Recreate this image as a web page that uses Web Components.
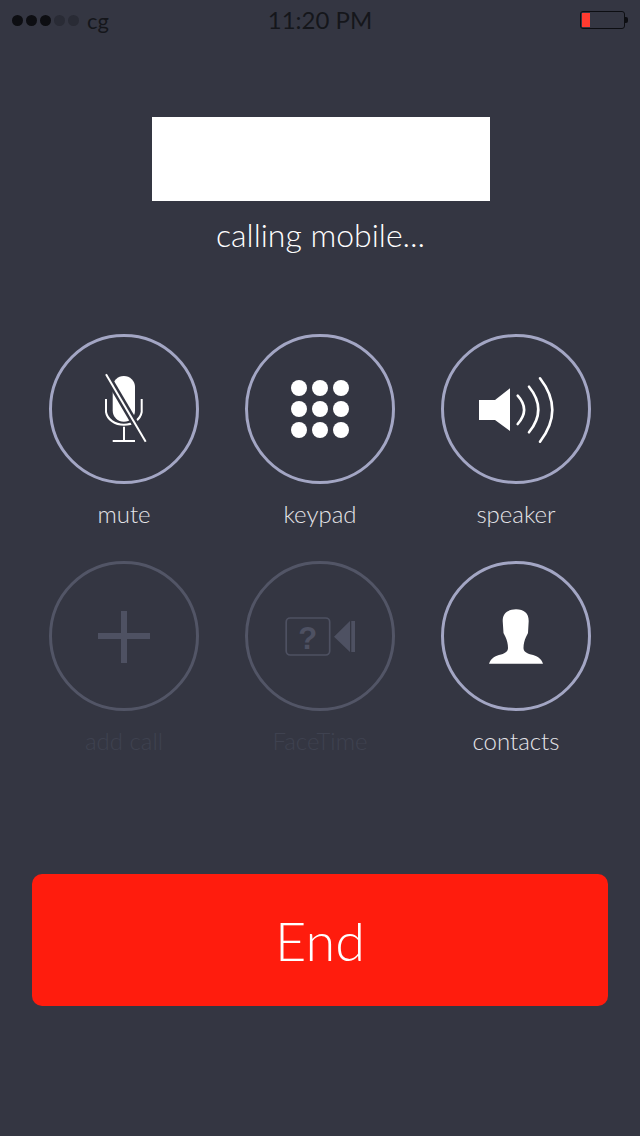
<!DOCTYPE html>
<html lang="en">
<head>
<meta charset="utf-8">
<title>Calling</title>
<style>
    html, body { margin: 0; padding: 0; background: #343642; }
    body { font-family: "Lato", "Liberation Sans", sans-serif; font-weight: 300; }
</style>
</head>
<body>

<call-screen>
    <status-bar></status-bar>
    <caller-card status="calling mobile..."></caller-card>
    <div style="display:contents">
        <call-grid>
            <call-button label="mute">
                <svg viewBox="3 3 144 144" fill="none">
                    <rect x="63.7" y="42" width="22.3" height="45.7" rx="11.1" fill="#fff"/>
                    <path d="M57 65v13a18 14.7 0 0 0 35.7 0V65M75 92.7V107M63.7 107H86" stroke="#fff" stroke-width="2"/>
                    <path d="M57 40.3 96.7 107.7" stroke="#343642" stroke-width="7"/>
                    <path d="M57 40.3 96.7 107.7" stroke="#fff" stroke-width="2"/>
                </svg>
            </call-button>
            <call-button label="keypad">
                <svg viewBox="3 3 144 144" fill="#fff">
                    <circle cx="54" cy="54" r="8"/><circle cx="75" cy="54" r="8"/><circle cx="96" cy="54" r="8"/>
                    <circle cx="54" cy="75" r="8"/><circle cx="75" cy="75" r="8"/><circle cx="96" cy="75" r="8"/>
                    <circle cx="54" cy="96" r="8"/><circle cx="75" cy="96" r="8"/><circle cx="96" cy="96" r="8"/>
                </svg>
            </call-button>
            <call-button label="speaker">
                <svg viewBox="3 3 144 144" fill="none">
                    <path d="M38 66H54L69 54.3V97L54 86H38Z" fill="#fff"/>
                    <path d="M76.7 61.7Q89.5 75.8 76.7 90M88 52.7Q106.6 75.5 88 98.3M99 44.3Q123.6 76 99 107.7" stroke="#fff" stroke-width="2.6" stroke-linecap="round"/>
                </svg>
            </call-button>
            <call-button label="add call" disabled>
                <svg viewBox="3 3 144 144" fill="#4e5162">
                    <path d="M72 50h6v22h23v6H78v24h-6V78H49v-6h23Z"/>
                </svg>
            </call-button>
            <call-button label="FaceTime" disabled>
                <svg viewBox="3 3 144 144" fill="#4e5162">
                    <rect x="41.2" y="57" width="43.5" height="37" rx="4" fill="none" stroke="#4e5162" stroke-width="1.7"/>
                    <text x="62.7" y="87.6" text-anchor="middle" font-family="Liberation Sans" font-weight="700" font-size="31">?</text>
                    <path d="M89 75.7 105 60V91ZM106.3 60H110V91H106.3Z"/>
                </svg>
            </call-button>
            <call-button label="contacts">
                <svg viewBox="3 3 144 144" fill="#fff">
                    <path d="M48 102.7C50 97 54 95 60 93.5 65 92 67 90 67 87 67 83 66 79 64.5 76L62.5 72 61.7 60C61.7 52 67 48.5 75 48.3 83 48.5 87.7 52 87.7 60L87 72 85 76C83.5 79 82.5 83 82.5 87 82.5 90 84.5 92 90 93.5 96 95 100 97 102 102.7Z"/>
                </svg>
            </call-button>
        </call-grid>
    </div>
    <end-button>End</end-button>
</call-screen>

<script>
class CallScreen extends HTMLElement {
    constructor() {
        super();
        this.attachShadow({ mode: 'open' });
        this.shadowRoot.innerHTML = `
        <style>
            :host {
                display: flex;
                flex-direction: column;
                width: 640px;
                height: 1136px;
                overflow: hidden;
                background: #343642;
            }
        </style>
        <slot></slot>`;
    }
}

class StatusBar extends HTMLElement {
    constructor() {
        super();
        this.attachShadow({ mode: 'open' });
        this.shadowRoot.innerHTML = `
        <style>
            :host {
                display: flex;
                align-items: center;
                justify-content: space-between;
                height: 40px;
                padding: 0 12px 0 12px;
                color: #15161b;
                font-weight: 400;
            }
            .signal { display: flex; align-items: center; gap: 3px; width: 200px; }
            .dot { width: 11px; height: 11px; border-radius: 50%; background: #0d0e12; }
            .dot.off { background: #292b35; }
            .carrier { font-size: 22px; margin-left: 5px; line-height: 1; position: relative; top: 1px; }
            .time { font-size: 24px; line-height: 1; }
            .battery { display: flex; align-items: center; justify-content: flex-end; width: 200px; }
            .cell { width: 45px; height: 18px; box-sizing: border-box; border: 1px solid #0d0e12; border-radius: 3px; padding: 1px; }
            .level { width: 8px; height: 100%; background: #ff3b30; }
            .nub { width: 3px; height: 6px; background: #0d0e12; border-radius: 0 2px 2px 0; }
        </style>
        <div class="signal">
            <span class="dot"></span><span class="dot"></span><span class="dot"></span>
            <span class="dot off"></span><span class="dot off"></span>
            <span class="carrier">cg</span>
        </div>
        <div class="time">11:20 PM</div>
        <div class="battery"><div class="cell"><div class="level"></div></div><div class="nub"></div></div>`;
    }
}

class CallerCard extends HTMLElement {
    constructor() {
        super();
        this.attachShadow({ mode: 'open' });
    }

    connectedCallback() {
        const status = this.getAttribute('status') || '';
        this.shadowRoot.innerHTML = `
        <style>
            :host {
                display: flex;
                flex-direction: column;
                align-items: center;
                padding-top: 77px;
                margin-right: -1px;
            }
            .name { width: 338px; height: 84px; background: #fff; }
            .status {
                margin-top: 14px;
                font-size: 32px;
                line-height: 40px;
                color: #fff;
            }
        </style>
        <div class="name"></div>
        <div class="status">${status}</div>`;
    }
}

class CallGrid extends HTMLElement {
    constructor() {
        super();
        this.attachShadow({ mode: 'open' });
        this.shadowRoot.innerHTML = `
        <style>
            :host {
                display: grid;
                grid-template-columns: repeat(3, 150px);
                column-gap: 46px;
                row-gap: 32px;
                padding: 79px 0 0 49px;
            }
        </style>
        <slot></slot>`;
    }
}

class CallButton extends HTMLElement {
    constructor() {
        super();
        this.attachShadow({ mode: 'open' });
    }

    connectedCallback() {
        const label = this.getAttribute('label') || '';
        this.shadowRoot.innerHTML = `
        <style>
            :host {
                display: flex;
                flex-direction: column;
                align-items: center;
                width: 150px;
                --ring: #a3a6c4;
                --text: #e4e4e8;
            }
            :host([disabled]) {
                --ring: #525566;
                --text: #3f4250;
            }
            .ring {
                box-sizing: border-box;
                width: 150px;
                height: 150px;
                border: 3px solid var(--ring);
                border-radius: 50%;
            }
            ::slotted(svg) { display: block; width: 144px; height: 144px; }
            .label {
                margin-top: 15px;
                font-size: 24px;
                line-height: 30px;
                height: 30px;
                color: var(--text);
                white-space: nowrap;
            }
        </style>
        <div class="ring"><slot></slot></div>
        <div class="label">${label}</div>`;
    }
}

class EndButton extends HTMLElement {
    constructor() {
        super();
        this.attachShadow({ mode: 'open' });
        this.shadowRoot.innerHTML = `
        <style>
            :host {
                display: flex;
                align-items: center;
                justify-content: center;
                height: 132px;
                margin: 118px 32px 0;
                border-radius: 10px;
                background: #ff1c0d;
                color: #fff;
                font-size: 54px;
            }
        </style>
        <slot></slot>`;
    }
}

customElements.define('call-screen', CallScreen);
customElements.define('status-bar', StatusBar);
customElements.define('caller-card', CallerCard);
customElements.define('call-grid', CallGrid);
customElements.define('call-button', CallButton);
customElements.define('end-button', EndButton);
</script>
</body>
</html>
